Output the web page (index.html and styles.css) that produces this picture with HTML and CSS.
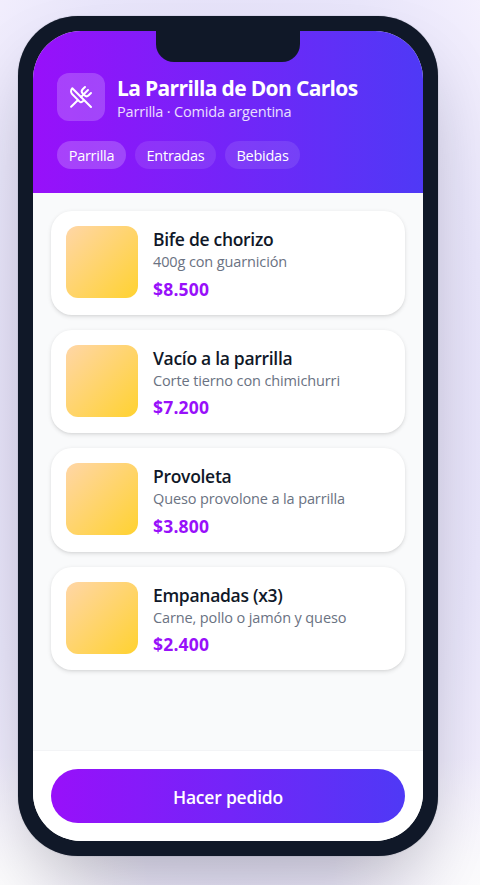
FILE: index.html
```html
<!DOCTYPE html>
<html lang="es">
<head>
<meta charset="utf-8">
<title>La Parrilla de Don Carlos</title>
<link rel="stylesheet" href="styles.css">
</head>
<body>
<div class="phone">
  <div class="notch"></div>
  <main class="screen">
    <header class="header">
      <div class="brand">
        <div class="logo">
          <svg viewBox="0 0 24 24" width="24" height="24" fill="none" stroke="currentColor" stroke-width="2" stroke-linecap="round" stroke-linejoin="round"><path d="m16 2-2.3 2.3a3 3 0 0 0 0 4.2l1.8 1.8a3 3 0 0 0 4.2 0L22 8"/><path d="M15 15 3.3 3.3a4.2 4.2 0 0 0 0 6l7.3 7.3c.7.7 2 .7 2.8 0L15 15Zm0 0 7 7"/><path d="m2.1 21.8 6.4-6.3"/><path d="m19 5-7 7"/></svg>
        </div>
        <div>
          <h1 class="title">La Parrilla de Don Carlos</h1>
          <p class="subtitle">Parrilla · Comida argentina</p>
        </div>
      </div>
      <nav class="tabs">
        <span class="tab tab-active">Parrilla</span>
        <span class="tab tab-entradas">Entradas</span>
        <span class="tab tab-bebidas">Bebidas</span>
      </nav>
    </header>
    <section class="menu">
      <article class="dish"><div class="photo"></div><div><h2 class="name">Bife de chorizo</h2><p class="desc">400g con guarnición</p><p class="price">$8.500</p></div></article>
      <article class="dish"><div class="photo"></div><div><h2 class="name">Vacío a la parrilla</h2><p class="desc">Corte tierno con chimichurri</p><p class="price">$7.200</p></div></article>
      <article class="dish"><div class="photo"></div><div><h2 class="name">Provoleta</h2><p class="desc">Queso provolone a la parrilla</p><p class="price">$3.800</p></div></article>
      <article class="dish"><div class="photo"></div><div><h2 class="name">Empanadas (x3)</h2><p class="desc">Carne, pollo o jamón y queso</p><p class="price">$2.400</p></div></article>
    </section>
    <footer class="footer"><button class="order">Hacer pedido</button></footer>
  </main>
</div>
</body>
</html>
```
FILE: styles.css
```css
* { box-sizing: border-box; margin: 0; padding: 0; }
body {
  height: 885px;
  overflow: hidden;
  padding: 16px 0 0 18px;
  font-family: "Segoe UI", "Open Sans", "Noto Sans", sans-serif;
  background:
    radial-gradient(ellipse 150px 130px at 0 100%, #fcfcfd, transparent),
    radial-gradient(ellipse 150px 130px at 100% 100%, #fcfcfd, transparent),
    radial-gradient(ellipse 350px 620px at 228px 410px, #e6e2f9 60%, #e9e6fb 75%, #f5f1fe 100%);
}
.phone {
  position: relative;
  width: 420px;
  height: 840px;
  padding: 15px;
  border-radius: 60px;
  background: #101828;
  box-shadow: 0 0 1px rgba(16, 24, 40, .5), 0 37px 75px -18px rgba(0, 0, 0, .25);
}
.notch {
  position: absolute;
  top: 15px;
  left: 138px;
  width: 144px;
  height: 30.5px;
  border-radius: 0 0 18px 18px;
  background: #101828;
}
.screen {
  display: flex;
  flex-direction: column;
  height: 100%;
  overflow: hidden;
  border-radius: 48px;
  background: #f9fafb;
}
.header {
  height: 162px;
  padding: 42px 24px 24px;
  color: #fff;
  background: linear-gradient(90deg, #9810fa, #4f39f6);
}
.brand { display: flex; gap: 12px; height: 48px; }
.logo {
  display: grid;
  place-items: center;
  width: 48px;
  height: 48px;
  border-radius: 12px;
  background: rgba(255, 255, 255, .2);
}
.title { margin-top: 2px; font-size: 21px; line-height: 26px; font-weight: 700; letter-spacing: -.65px; white-space: nowrap; }
.subtitle { font-size: 14.5px; line-height: 22px; letter-spacing: -.18px; opacity: .85; }
.tabs { display: flex; gap: 9px; margin-top: 20px; }
.tab {
  width: 69px;
  height: 28px;
  padding-top: 1px;
  border-radius: 14px;
  background: rgba(255, 255, 255, .1);
  font-size: 14.5px;
  line-height: 28px;
  letter-spacing: -.25px;
  text-align: center;
}
.tab-active { background: rgba(255, 255, 255, .2); }
.tab-entradas { width: 81px; }
.tab-bebidas { width: 75px; }
.menu { display: flex; flex: 1; flex-direction: column; gap: 15px; padding: 18px; }
.dish {
  display: flex;
  gap: 15px;
  height: 103.5px;
  padding: 15px;
  border-radius: 21px;
  background: #fff;
  box-shadow: 0 1.5px 4.5px rgba(0, 0, 0, .1), 0 1.5px 3px -1.5px rgba(0, 0, 0, .1);
}
.photo { width: 72px; height: 72px; border-radius: 12px; background: linear-gradient(135deg, #ffd6a7, #ffd230); }
.name { margin-top: 1px; color: #101828; font-size: 17.5px; line-height: 24px; font-weight: 600; letter-spacing: -.3px; }
.desc { color: #6a7282; font-size: 14.5px; line-height: 21px; letter-spacing: -.12px; }
.price { margin-top: 3.5px; color: #9810fa; font-size: 17.5px; line-height: 26px; font-weight: 700; letter-spacing: .2px; }
.footer { height: 91px; padding: 18px; border-top: 1px solid #f3f4f6; background: #fff; }
.order {
  display: block;
  width: 100%;
  height: 54px;
  border: 0;
  border-radius: 27px;
  color: #fff;
  background: linear-gradient(90deg, #9810fa, #4f39f6);
  font: 600 17.5px/56px "Segoe UI", "Open Sans", "Noto Sans", sans-serif;
  letter-spacing: -.2px;
}
```
